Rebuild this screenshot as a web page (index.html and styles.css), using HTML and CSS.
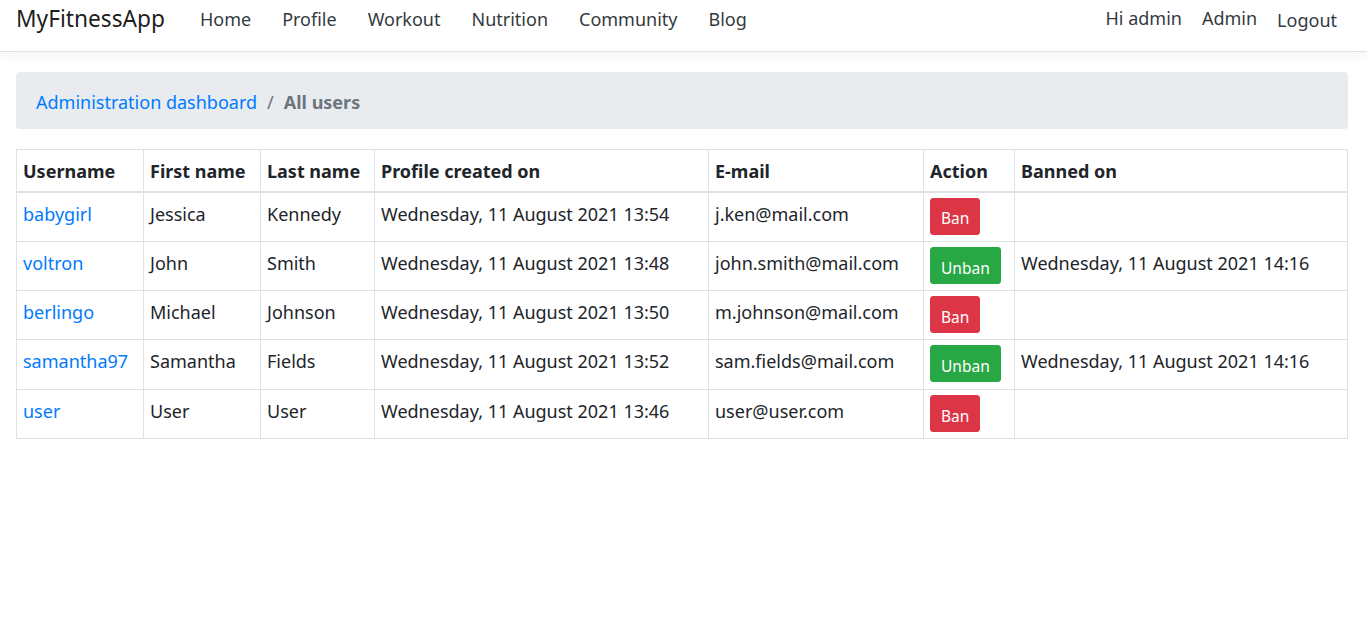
FILE: index.html
```html
<!DOCTYPE html>
<html lang="en">
<head>
<meta charset="utf-8">
<title>All users - MyFitnessApp</title>
<link rel="stylesheet" href="styles.css">
</head>
<body>
<header class="navbar">
  <a class="brand" href="#">MyFitnessApp</a>
  <nav class="nav-main">
    <a href="#">Home</a>
    <a href="#">Profile</a>
    <a href="#">Workout</a>
    <a href="#">Nutrition</a>
    <a href="#">Community</a>
    <a href="#">Blog</a>
  </nav>
  <nav class="nav-user">
    <a href="#">Hi admin</a>
    <a href="#">Admin</a>
    <a href="#" class="logout">Logout</a>
  </nav>
</header>
<main class="content">
  <div class="breadcrumb">
    <a href="#">Administration dashboard</a>
    <span class="sep">/</span>
    <span class="active">All users</span>
  </div>
  <table class="users">
    <colgroup>
      <col class="c1"><col class="c2"><col class="c3"><col class="c4"><col class="c5"><col class="c6"><col class="c7">
    </colgroup>
    <thead>
      <tr><th>Username</th><th>First name</th><th>Last name</th><th>Profile created on</th><th>E-mail</th><th>Action</th><th>Banned on</th></tr>
    </thead>
    <tbody>
      <tr class="tall"><td><a href="#">babygirl</a></td><td>Jessica</td><td>Kennedy</td><td>Wednesday, 11 August 2021 13:54</td><td>j.ken@mail.com</td><td class="act"><button class="btn ban">Ban</button></td><td></td></tr>
      <tr><td><a href="#">voltron</a></td><td>John</td><td>Smith</td><td>Wednesday, 11 August 2021 13:48</td><td>john.smith@mail.com</td><td class="act"><button class="btn unban">Unban</button></td><td>Wednesday, 11 August 2021 14:16</td></tr>
      <tr><td><a href="#">berlingo</a></td><td>Michael</td><td>Johnson</td><td>Wednesday, 11 August 2021 13:50</td><td>m.johnson@mail.com</td><td class="act"><button class="btn ban">Ban</button></td><td></td></tr>
      <tr class="tall"><td><a href="#">samantha97</a></td><td>Samantha</td><td>Fields</td><td>Wednesday, 11 August 2021 13:52</td><td>sam.fields@mail.com</td><td class="act"><button class="btn unban">Unban</button></td><td>Wednesday, 11 August 2021 14:16</td></tr>
      <tr><td><a href="#">user</a></td><td>User</td><td>User</td><td>Wednesday, 11 August 2021 13:46</td><td>user@user.com</td><td class="act"><button class="btn ban">Ban</button></td><td></td></tr>
    </tbody>
  </table>
</main>
</body>
</html>
```
FILE: styles.css
```css
* { box-sizing: border-box; }
html, body { margin: 0; padding: 0; background: #fff; }
body {
  font-family: "Noto Sans", "Open Sans", sans-serif;
  font-size: 18px;
  line-height: 24px;
  color: #212529;
}
a { text-decoration: none; color: #007bff; }

.navbar {
  display: flex;
  align-items: flex-start;
  height: 52px;
  padding: 7px 30px 0 16px;
  border-bottom: 1px solid #dee2e6;
  box-shadow: 0 4px 12px rgba(0,0,0,.05);
}
.brand {
  font-size: 22.7px;
  line-height: 26px;
  margin-top: -1px;
  color: rgba(0,0,0,.9);
  margin-right: 35px;
}
.nav-main, .nav-user { display: flex; gap: 31px; }
.nav-main a, .nav-user a { color: #343a40; }
.nav-user { margin-left: auto; gap: 20px; }
.nav-user a { margin-top: -1px; }
.nav-user a.logout { margin-top: 1px; }

.content { padding: 20px 19px 0 16px; }

.breadcrumb {
  background: #e9ecef;
  border-radius: 4px;
  padding: 2px 20px 0 20px;
  height: 57px;
  margin-bottom: 20px;
  display: flex;
  align-items: center;
}
.breadcrumb .sep { color: #6c757d; padding: 0 10px; }
.breadcrumb .active { color: #6c757d; font-weight: 700; }

.users {
  width: 100%;
  border-collapse: collapse;
  table-layout: fixed;
}
.c1 { width: 127px; } .c2 { width: 117px; } .c3 { width: 114px; }
.c4 { width: 334px; } .c5 { width: 215px; } .c6 { width: 91px; }
.users th, .users td {
  border: 1px solid #dee2e6;
  padding: 9px 6px 15px 6px;
  text-align: left;
  vertical-align: top;
  white-space: nowrap;
  height: 49px;
}
.users tr.tall td { height: 50px; }
.users th { font-weight: 700; height: 42px; padding: 9px 6px 7px 6px; border-bottom: 2px solid #dee2e6; }
.users td.act { padding: 5px 6px 6px 6px; }

.btn {
  font-family: inherit;
  font-size: 15.5px;
  line-height: 1;
  color: #fff;
  border: 1px solid transparent;
  border-radius: 3px;
  height: 37px;
  padding: 6px 10px 0 10px;
  cursor: pointer;
}
.ban { background: #dc3545; border-color: #dc3545; }
.unban { background: #28a745; border-color: #28a745; }
```
